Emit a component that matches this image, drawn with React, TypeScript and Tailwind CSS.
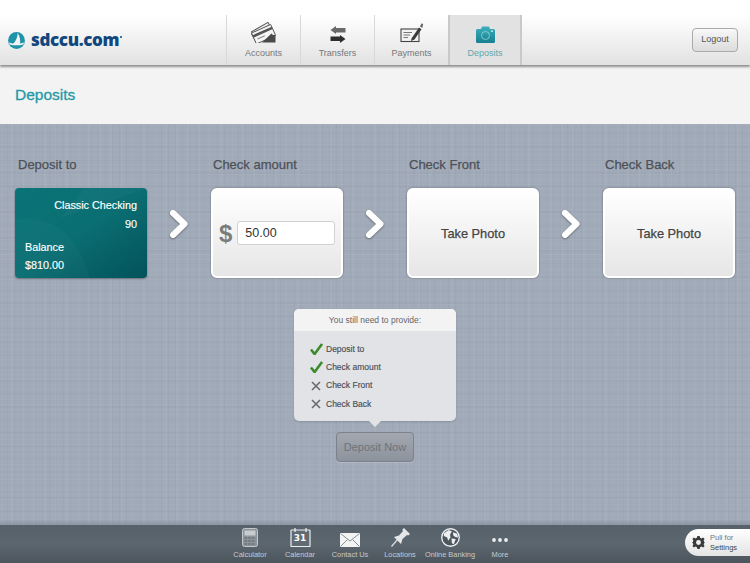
import type { ReactNode } from 'react';

const AccountsIcon = () => (
  <svg width="25" height="21" viewBox="0 0 25 21">
    <g transform="rotate(-30 11 9)">
      <rect x="0" y="4" width="21" height="12" rx="1" fill="#555" />
      <rect x="1" y="5" width="19" height="10" fill="#eee" />
      <rect x="1" y="7" width="19" height="1.3" fill="#555" />
      <rect x="1" y="9.5" width="19" height="1.3" fill="#555" />
    </g>
    <g transform="rotate(-24 13 12)">
      <rect x="2" y="6" width="21" height="12" rx="1" fill="#f5f5f5" stroke="#555" strokeWidth="0.9" />
      <rect x="2" y="8.5" width="21" height="2.6" fill="#555" />
      <rect x="5" y="13.5" width="8" height="0.9" fill="#888" />
    </g>
    <path d="M11 20.5 L20.5 11.5 L22 13 H24.5 V20.5 Z" fill="#4a4a4a" />
  </svg>
);

const TransfersIcon = () => (
  <svg width="16" height="17" viewBox="0 0 16 17">
    <path d="M0.5 4 L6 0 V2 H15.5 V6.5 H6 V8 Z" fill="#6a6a6a" />
    <path d="M15.5 13 L10 17 V15 H0.5 V10.5 H10 V9 Z" fill="#2e2e2e" />
  </svg>
);

const PaymentsIcon = () => (
  <svg width="24" height="20" viewBox="0 0 24 20">
    <rect x="1" y="6" width="18" height="12.5" fill="#f2f2f2" stroke="#444" strokeWidth="1.1" />
    <path d="M3.5 9.5 H12 M3.5 12 H10 M3.5 14.5 H8" stroke="#666" strokeWidth="0.9" />
    <path d="M11.5 15.5 L19 4.5 L21.5 6.2 L14.5 16.5 L11 18 Z" fill="#3a3a3a" />
    <path d="M20 3.4 L21.6 0.3 L23.2 1.3 L22.3 5 Z" fill="#666" />
  </svg>
);

const CameraIcon = () => (
  <svg width="19" height="17" viewBox="0 0 19 17">
    <defs>
      <linearGradient id="cam" x1="0" y1="0" x2="0" y2="1">
        <stop offset="0" stopColor="#3db0bd" />
        <stop offset="1" stopColor="#15808f" />
      </linearGradient>
    </defs>
    <path d="M1.5 3 H5 L6 0.5 H13 L14 3 H17.5 Q19 3 19 4.5 V15.5 Q19 17 17.5 17 H1.5 Q0 17 0 15.5 V4.5 Q0 3 1.5 3 Z" fill="url(#cam)" />
    <circle cx="9.5" cy="9.5" r="4" fill="none" stroke="#a9dde3" strokeWidth="0.7" />
    <circle cx="16" cy="5.2" r="0.9" fill="#d5f0f3" />
  </svg>
);

const CalculatorIcon = () => (
  <svg width="16" height="19" viewBox="0 0 16 19">
    <rect x="0.5" y="0.5" width="15" height="18" rx="2" fill="#8d959b" stroke="#c3c7ca" />
    <rect x="2.5" y="2.5" width="11" height="5" fill="#c8ccce" />
    <path d="M2.5 10 H13.5 M2.5 13 H13.5 M2.5 16 H13.5" stroke="#5c656c" strokeWidth="1.2" strokeDasharray="2.6 1" />
  </svg>
);

const CalendarIcon = () => (
  <div className="relative h-[19px] w-[21px]">
    <svg width="21" height="19" viewBox="0 0 21 19" className="absolute inset-0">
      <rect x="1" y="2" width="19" height="16.5" rx="0.5" fill="#606b73" stroke="#eceeef" strokeWidth="1.2" />
      <path d="M5 0 V4 M16 0 V4" stroke="#eceeef" strokeWidth="1.3" />
    </svg>
    <span className="absolute inset-x-0 top-[5px] text-center font-['DejaVu_Sans',sans-serif] text-[9px] leading-[11px] font-bold text-white">
      31
    </span>
  </div>
);

const ContactIcon = () => (
  <svg width="20" height="14" viewBox="0 0 20 14" className="mt-[6px]">
    <rect width="20" height="14" fill="#f2f3f3" />
    <path d="M0.5 0.5 L10 8 L19.5 0.5 M0.5 13.5 L7.5 6.5 M19.5 13.5 L12.5 6.5" fill="none" stroke="#7b848b" strokeWidth="0.9" />
  </svg>
);

const PinIcon = () => (
  <svg width="19" height="19" viewBox="0 0 19 19">
    <path d="M0.5 18.5 L7 11" stroke="#d8dbdd" strokeWidth="1.3" />
    <path d="M3 9 L8 7.5 L12 3 L11.2 1.8 L13 0 L19 6 L17.2 7.6 L16 7 L11.5 11 L10 16 Z" fill="#e4e6e8" />
  </svg>
);

const GlobeIcon = () => (
  <svg width="19" height="19" viewBox="0 0 20 20">
    <circle cx="10" cy="10" r="9.2" fill="#4c565e" stroke="#f0f1f2" strokeWidth="1.4" />
    <path d="M3 5.5 L8 2 L11.5 3.5 L9.5 7 L10 10 L7.5 13.5 L6.5 10 L3 8.5 Z" fill="#eceeef" />
    <path d="M12.5 4.5 L17 6 L18 10 L15 9.5 L13 8 Z M11 11 L15.5 11.5 L13.5 17 L11.5 16 Z" fill="#eceeef" />
  </svg>
);

const DotsIcon = () => (
  <svg width="16" height="4" viewBox="0 0 16 4" className="mt-[6px]">
    <circle cx="2" cy="2" r="1.9" fill="#eceeef" />
    <circle cx="8" cy="2" r="1.9" fill="#eceeef" />
    <circle cx="14" cy="2" r="1.9" fill="#eceeef" />
  </svg>
);

const GearIcon = () => (
  <svg width="13" height="13" viewBox="0 0 24 24">
    <path
      d="M10 0 H14 L15 3.4 L17.6 4.5 L20.5 2.8 L23.2 5.5 L21.5 8.4 L22.6 11 L24 12 L22.6 13 L21.5 15.6 L23.2 18.5 L20.5 21.2 L17.6 19.5 L15 20.6 L14 24 H10 L9 20.6 L6.4 19.5 L3.5 21.2 L0.8 18.5 L2.5 15.6 L1.4 13 L0 12 L1.4 11 L2.5 8.4 L0.8 5.5 L3.5 2.8 L6.4 4.5 L9 3.4 Z M12 7.5 A4.5 4.5 0 1 0 12 16.5 A4.5 4.5 0 1 0 12 7.5 Z"
      fill="#3a3a3a"
      fillRule="evenodd"
    />
  </svg>
);

const LogoMark = () => (
  <svg width="17" height="17" viewBox="0 0 17 17">
    <circle cx="8.5" cy="8.5" r="8.4" fill="#1f93a8" />
    <path d="M9.8 1 C12 4.5 12.6 8.5 12 12 L5 12 C7.5 9.5 9.4 6 9.8 1 Z" fill="#f4f4f4" />
    <path d="M1 10.5 C5 12.4 12 12.4 16 10.5 L15.4 12.4 C11 13.6 6 13.6 1.6 12.4 Z" fill="#f4f4f4" />
  </svg>
);

const Chevron = () => (
  <div className="flex h-[90px] w-[64px] items-center justify-center pb-[18px]">
    <svg width="20" height="30" viewBox="0 0 20 30" className="drop-shadow-[0_1px_1px_rgba(0,0,0,0.35)]">
      <path d="M4 4 L15.5 15 L4 26" fill="none" stroke="#fff" strokeWidth="6" strokeLinecap="round" strokeLinejoin="round" />
    </svg>
  </div>
);

function NavItem({ icon, label, active }: { icon: ReactNode; label: string; active?: boolean }) {
  return (
    <div
      className={`flex w-[74px] flex-col items-center border-r ${
        active ? '-ml-px border-r-2 border-l-2 border-r-[#c9c9c9] border-l-[#c9c9c9] bg-[#e2e2e2]' : 'border-[#d8d8d8]'
      }`}
    >
      <div className="flex h-[28px] items-end justify-center">{icon}</div>
      <span className={`mt-[4px] text-[9px] leading-[12px] ${active ? 'text-[#5aa9b1]' : 'text-[#777]'}`}>{label}</span>
    </div>
  );
}

function Step({ label, children, first }: { label: string; children: ReactNode; first?: boolean }) {
  return (
    <div className="w-[132px]">
      <div
        className={`mb-[15px] text-[13px] leading-[16px] text-[#4d5157] [-webkit-text-stroke:0.25px] ${
          first ? 'pl-[3px]' : 'pl-[2px]'
        }`}
      >
        {label}
      </div>
      {children}
    </div>
  );
}

function PhotoCard() {
  return (
    <div className="flex h-[90px] items-center justify-center rounded-[6px] border-2 border-white bg-gradient-to-b from-white to-[#e6e6e6] pt-[2px] text-[12.8px] text-[#444] shadow-[0_0_2px_rgba(0,0,0,0.4)] [-webkit-text-stroke:0.25px]">
      Take Photo
    </div>
  );
}

function NeedRow({ done, label }: { done?: boolean; label: string }) {
  return (
    <div className="flex h-[18.3px] items-center">
      <div className="flex w-[16px] justify-center">
        {done ? (
          <svg width="13" height="12" viewBox="0 0 14 13">
            <path d="M1 7 L5 12 L13 1" fill="none" stroke="#3c8a2c" strokeWidth="2.8" strokeLinejoin="round" />
          </svg>
        ) : (
          <svg width="10" height="10" viewBox="0 0 10 10">
            <path d="M1 1 L9 9 M9 1 L1 9" stroke="#6a6a6a" strokeWidth="1.6" />
          </svg>
        )}
      </div>
      <span className="ml-[2px] text-[8.5px] text-[#4a4e55] [-webkit-text-stroke:0.15px]">{label}</span>
    </div>
  );
}

function FootItem({ icon, label }: { icon: ReactNode; label: string }) {
  return (
    <div className="flex w-[50px] flex-col items-center">
      <div className="flex h-[22px] items-center justify-center">{icon}</div>
      <span className="mt-[2px] text-[7.4px] leading-[9px] whitespace-nowrap text-[#c6cbcf]">{label}</span>
    </div>
  );
}

export default function App() {
  return (
    <div className="flex h-[563px] w-[750px] flex-col overflow-hidden bg-white font-['Liberation_Sans',Arial,sans-serif] antialiased">
      <div className="h-[15px] bg-white" />

      <header className="relative z-10 flex h-[50px] items-stretch bg-gradient-to-b from-white to-[#e2e2e2] shadow-[0_2px_2px_rgba(0,0,0,0.4)]">
        <div className="flex w-[227px] items-center border-r border-[#d8d8d8] pl-[8px]">
          <LogoMark />
          <span className="ml-[6px] font-['Open_Sans',sans-serif] text-[17px] font-extrabold tracking-[-0.35px] text-[#10477e]">
            sdccu.com
          </span>
          <span className="mb-[6px] ml-px h-[2px] w-[2px] rounded-full bg-[#10477e]" />
        </div>
        <NavItem icon={<AccountsIcon />} label="Accounts" />
        <NavItem icon={<TransfersIcon />} label="Transfers" />
        <NavItem icon={<PaymentsIcon />} label="Payments" />
        <NavItem icon={<CameraIcon />} label="Deposits" active />
        <div className="ml-auto flex items-center pr-[12px]">
          <button className="h-[24px] w-[46px] rounded-[4px] border border-[#aaa] bg-gradient-to-b from-[#f8f8f8] to-[#dcdcdc] text-[9px] text-[#555]">
            Logout
          </button>
        </div>
      </header>

      <div className="flex h-[59px] items-center bg-[#f3f3f3] pl-[15px] text-[15.5px] text-[#2399a8] [-webkit-text-stroke:0.3px]">
        Deposits
      </div>

      <main className="flex flex-1 flex-col items-center bg-[#a1aab8] bg-[linear-gradient(to_top,rgba(50,60,70,0.18),transparent_6px),repeating-linear-gradient(0deg,rgba(255,255,255,0.04)_0px,rgba(255,255,255,0.04)_1px,transparent_1px,transparent_5px),repeating-linear-gradient(0deg,rgba(60,70,90,0.03)_0px,rgba(60,70,90,0.03)_2px,transparent_2px,transparent_13px),repeating-linear-gradient(90deg,rgba(60,70,90,0.04)_0px,rgba(60,70,90,0.04)_1px,transparent_1px,transparent_7px),repeating-linear-gradient(90deg,rgba(255,255,255,0.04)_0px,rgba(255,255,255,0.04)_2px,transparent_2px,transparent_11px)] pt-[33px]">
        <div className="flex items-end">
          <Step label="Deposit to" first>
            <div className="relative h-[90px] overflow-hidden rounded-[4px] bg-gradient-to-br from-[#0a7478] via-[#0a6e72] to-[#04525b] text-[10.8px] text-white shadow-[0_1px_2px_rgba(0,0,0,0.35)]">
              <svg width="132" height="90" viewBox="0 0 132 90" className="absolute inset-0">
                <path d="M0 32 C30 25 60 40 75 90 H0 Z" fill="rgba(255,255,255,0.025)" />
                <path d="M45 30 C75 20 105 10 132 0 H70 Z" fill="rgba(255,255,255,0.03)" />
              </svg>
              <div className="relative flex h-full flex-col pt-[11px] pr-[10px] pb-[6px] pl-[10px] [-webkit-text-stroke:0.15px]">
                <div className="text-right leading-[13px]">Classic Checking</div>
                <div className="mt-[6px] text-right leading-[13px]">90</div>
                <div className="mt-[10px] leading-[13px]">Balance</div>
                <div className="mt-[5px] leading-[13px]">$810.00</div>
              </div>
            </div>
          </Step>
          <Chevron />
          <Step label="Check amount">
            <div className="flex h-[90px] items-center rounded-[6px] border-2 border-white bg-gradient-to-b from-white to-[#e6e6e6] px-[6px] shadow-[0_0_2px_rgba(0,0,0,0.4)]">
              <span className="pt-[1px] text-[24px] font-bold text-[#7c7c7c]">$</span>
              <input
                readOnly
                value="50.00"
                className="ml-[5px] h-[24px] w-[98px] rounded-[3px] border border-[#d2d2d2] bg-white pl-[7px] text-[12.5px] text-[#333] outline-none"
              />
            </div>
          </Step>
          <Chevron />
          <Step label="Check Front">
            <PhotoCard />
          </Step>
          <Chevron />
          <Step label="Check Back">
            <PhotoCard />
          </Step>
        </div>

        <div className="relative mt-[31px] h-[112px] w-[162px] rounded-[5px] bg-[#e1e3e6] shadow-[0_1px_2px_rgba(0,0,0,0.15)]">
          <div className="flex h-[22px] items-center justify-center rounded-t-[5px] bg-[#f3f3f4] text-[8.5px] text-[#666]">
            You still need to provide:
          </div>
          <div className="pt-[9px] pl-[14px]">
            <NeedRow done label="Deposit to" />
            <NeedRow done label="Check amount" />
            <NeedRow label="Check Front" />
            <NeedRow label="Check Back" />
          </div>
          <div className="absolute top-full left-1/2 -ml-[6px] h-0 w-0 border-x-[6px] border-t-[6px] border-x-transparent border-t-[#e1e3e6]" />
        </div>

        <button className="mt-[11px] h-[30px] w-[78px] rounded-[4px] border border-[#7b828c] bg-gradient-to-b from-[#a2a7b0] to-[#8d939c] text-[11px] text-[#6d737c] shadow-[0_1px_1px_rgba(255,255,255,0.2)]">
          Deposit Now
        </button>
      </main>

      <footer className="relative flex h-[38px] justify-center bg-gradient-to-b from-[#56616a] via-[#5c666f] to-[#4c555c] pt-[1px]">
        <FootItem icon={<CalculatorIcon />} label="Calculator" />
        <FootItem icon={<CalendarIcon />} label="Calendar" />
        <FootItem icon={<ContactIcon />} label="Contact Us" />
        <FootItem icon={<PinIcon />} label="Locations" />
        <FootItem icon={<GlobeIcon />} label="Online Banking" />
        <FootItem icon={<DotsIcon />} label="More" />
        <div className="absolute top-[4px] right-0 flex h-[27px] w-[65px] items-center rounded-l-[14px] bg-gradient-to-b from-white to-[#e4e4e4] pl-[7px]">
          <GearIcon />
          <div className="ml-[5px] text-[7.5px] leading-[10px]">
            <div className="text-[#777]">Pull for</div>
            <div className="text-[#444]">Settings</div>
          </div>
        </div>
      </footer>
    </div>
  );
}
